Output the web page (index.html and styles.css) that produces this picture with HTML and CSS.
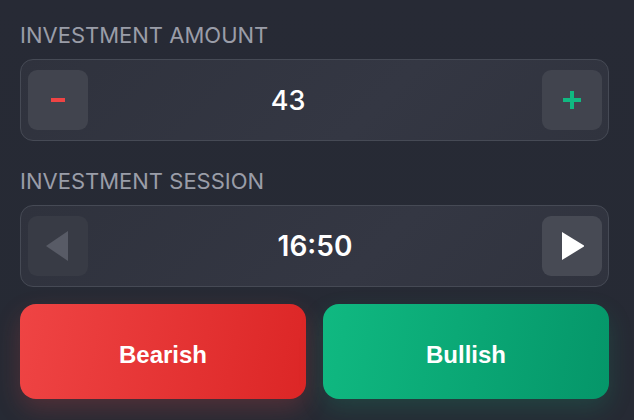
FILE: index.html
```html
<!DOCTYPE html>
<html>
<head>
<meta charset="utf-8">
<link rel="stylesheet" href="styles.css">
</head>
<body>
<div class="panel">
  <div class="field-label">INVESTMENT AMOUNT</div>
  <div class="stepper">
    <button class="step-btn">
      <svg width="16" height="16" viewBox="0 0 16 16"><rect x="1" y="6" width="14" height="4" fill="#ef4444"/></svg>
    </button>
    <div class="value value-amount">43</div>
    <button class="step-btn">
      <svg width="18" height="18" viewBox="0 0 18 18"><rect x="0" y="7" width="18" height="4" fill="#10b981"/><rect x="7" y="0" width="4" height="18" fill="#10b981"/></svg>
    </button>
  </div>

  <div class="field-label label-second">INVESTMENT SESSION</div>
  <div class="stepper">
    <button class="step-btn disabled">
      <svg width="24" height="30" viewBox="0 0 24 30"><polygon points="22,0 22,30 0,15" fill="#585b66"/></svg>
    </button>
    <div class="value value-time">16:50</div>
    <button class="step-btn light">
      <svg width="24" height="30" viewBox="0 0 24 30"><polygon points="2,1 2,29 25,15" fill="#ffffff"/></svg>
    </button>
  </div>

  <div class="actions">
    <button class="action bearish">Bearish</button>
    <button class="action bullish">Bullish</button>
  </div>
</div>
</body>
</html>
```
FILE: styles.css
```css
html, body {
  margin: 0;
  padding: 0;
}
body {
  width: 634px;
  height: 420px;
  background: linear-gradient(180deg, #272a35 0%, #262a34 100%);
  font-family: Inter, "Noto Sans", sans-serif;
  overflow: hidden;
}
.panel {
  padding: 22px 25px 0 20px;
  display: flex;
  flex-direction: column;
}
.field-label {
  font-size: 22px;
  line-height: 26px;
  color: #9a9da8;
  font-weight: 400;
  letter-spacing: 0;
  margin-bottom: 11px;
}
.label-second {
  margin-top: 27px;
  margin-bottom: 11px;
}
.stepper {
  display: flex;
  align-items: center;
  justify-content: space-between;
  height: 82px;
  box-sizing: border-box;
  padding: 10px 6px 10px 7px;
  border: 1px solid #464a55;
  border-radius: 13px;
  background: linear-gradient(135deg, #2f323d 0%, #343743 60%, #30333e 100%);
}
.step-btn {
  width: 60px;
  height: 60px;
  border: none;
  border-radius: 9px;
  background: #41444e;
  display: flex;
  align-items: center;
  justify-content: center;
  padding: 0;
}
.step-btn.disabled {
  background: #383b45;
}
.step-btn.light {
  background: #474a54;
}
.value {
  flex: 1;
  text-align: center;
  color: #ffffff;
}
.value-amount {
  font-size: 27px;
  font-weight: 500;
  padding-right: 54px;
}
.value-time {
  font-size: 28px;
  font-weight: 600;
}
.actions {
  display: flex;
  gap: 17px;
  margin-top: 17px;
}
.action {
  flex: 1;
  height: 95px;
  border: none;
  border-radius: 16px;
  color: #ffffff;
  font-family: "Liberation Sans", Arial, sans-serif;
  font-weight: 700;
  font-size: 24px;
  padding: 6px 0 0;
}
.bearish {
  background: linear-gradient(100deg, #ef4444 0%, #dc2626 100%);
  box-shadow: 0 10px 24px rgba(239, 68, 68, 0.22);
}
.bullish {
  background: linear-gradient(100deg, #10b981 0%, #059669 100%);
  box-shadow: 0 10px 24px rgba(16, 185, 129, 0.18);
}
```
